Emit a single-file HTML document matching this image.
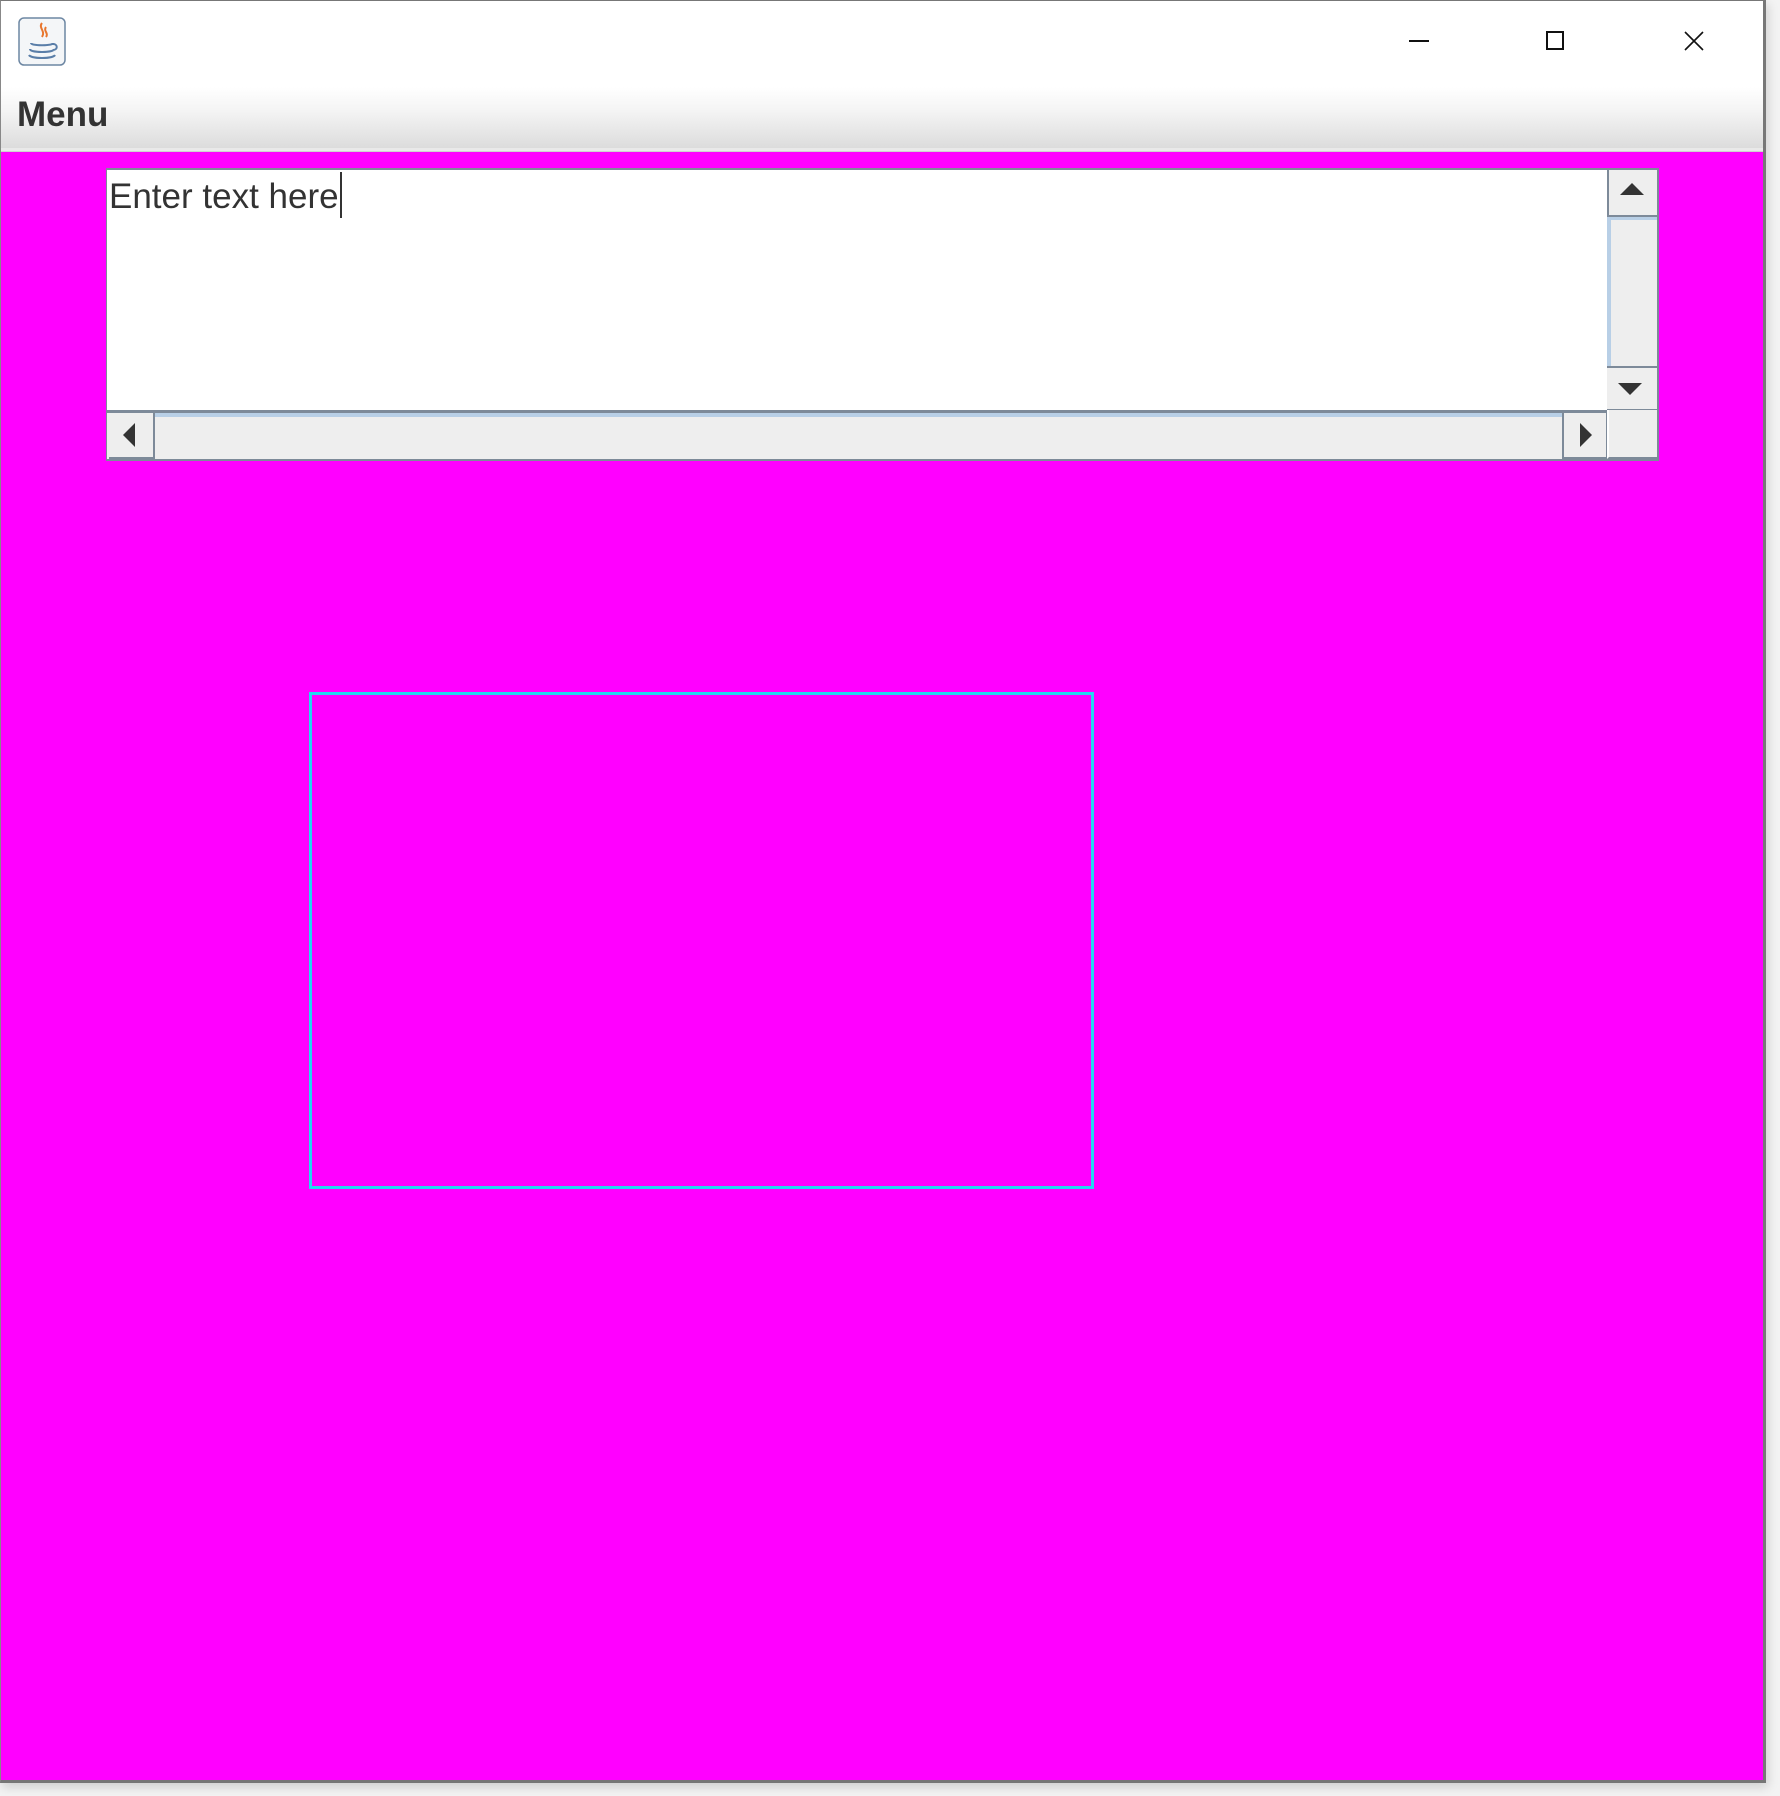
<!DOCTYPE html>
<html><head><style>
*{margin:0;padding:0;box-sizing:border-box}
body{width:1780px;height:1796px;background:#f3f3f3;position:relative;overflow:hidden;font-family:"Liberation Sans",sans-serif}
.win{position:absolute;left:0;top:0;width:1766px;height:1783px;border:1px solid #777;border-width:1px 3px 3px 1px;border-color:#777 #777 #777 #888;background:#ff00ff;box-shadow:2px 4px 10px rgba(0,0,0,.15)}
.title{position:absolute;left:0;top:0;width:1762px;height:86px;background:#fff}
.menu{position:absolute;left:0;top:86px;width:1762px;height:61px;background:linear-gradient(#fff 0%,#f4f4f4 40%,#dcdcdc 100%)}
.menu span{position:absolute;left:16px;top:8px;font-weight:bold;font-size:35px;color:#333}
.sep{position:absolute;left:0;top:147px;width:1762px;height:4px;background:#e9e9e9;border-bottom:1px solid #d0d0d0}
.ta{position:absolute;left:105px;top:167px;width:1553px;height:293px;background:#fff;border:1px solid #7d8a99;border-width:2px 3px 2px 1px}
.txt{position:absolute;left:2px;top:2px;font-size:35px;color:#333}
.caret{display:inline-block;width:2px;height:46px;background:#333;vertical-align:-10px;margin-left:1px}
.btn{position:absolute;background:#eee;border:2px solid #7d8a99}
.c{position:absolute;left:308px;top:691px;width:785px;height:497px;border:3px solid #22d8f0}
</style></head><body>
<div class="win">
<div class="title">
 <svg style="position:absolute;left:17px;top:16px" width="48" height="49" viewBox="0 0 48 49"><rect x="1" y="1" width="46" height="47" rx="5" fill="#f4f6f8" stroke="#6d87a3" stroke-width="1.5"/><path d="M24 6c-4 5 4 8 0 14M28 10c-3 4 3 6 0 10" stroke="#e8762d" stroke-width="2" fill="none"/><path d="M13 26c0 3 22 3 22 0M12 32c0 4 24 4 24 0M11 38c2 4 24 4 26 0M35 27c5 0 5 6 0 6" stroke="#5a7ea8" stroke-width="2" fill="none"/></svg>
 <div style="position:absolute;left:1408px;top:39px;width:20px;height:2px;background:#111"></div>
 <div style="position:absolute;left:1545px;top:30px;width:18px;height:19px;border:2px solid #111"></div>
 <svg style="position:absolute;left:1683px;top:30px" width="20" height="20"><path d="M1 1L19 19M19 1L1 19" stroke="#111" stroke-width="1.6"/></svg>
</div>
<div class="menu"><span>Menu</span></div>
<div class="sep"></div>
<div class="ta">
 <div class="txt">Enter text here<span class="caret"></span></div>
 <div class="btn" style="left:1500px;top:0;width:50px;height:47px;border-width:0 0 2px 2px"><svg width="48" height="45"><path d="M11 25L23 13L35 25Z" fill="#333"/></svg></div>
 <div style="position:absolute;left:1500px;top:47px;width:50px;height:150px;background:#eee;border-left:4px solid #b8cfe6;border-top:3px solid #b8cfe6"></div>
 <div class="btn" style="left:1500px;top:196px;width:50px;height:45px;border-width:2px 0 2px 0"><svg width="48" height="41"><path d="M11 15L35 15L23 27Z" fill="#333"/></svg></div>
 <div style="position:absolute;left:0;top:240px;width:1500px;height:49px;background:#eee;border-top:3px solid #7d8a99"></div>
 <div style="position:absolute;left:45px;top:243px;width:1410px;height:4px;background:#b8cfe6"></div>
 <div class="btn" style="left:2px;top:243px;width:46px;height:46px;border-width:0 2px 2px 0"><svg width="44" height="44"><path d="M26 10L26 34L14 22Z" fill="#333"/></svg></div>
 <div class="btn" style="left:1455px;top:243px;width:46px;height:46px;border-width:0 2px 2px 2px"><svg width="42" height="44"><path d="M16 10L16 34L28 22Z" fill="#333"/></svg></div>
 <div style="position:absolute;left:1500px;top:240px;width:50px;height:49px;background:#eee;border-left:2px solid #fff;border-bottom:2px solid #7d8a99"></div>
</div>
<div class="c"></div>
</div>
</body></html>
